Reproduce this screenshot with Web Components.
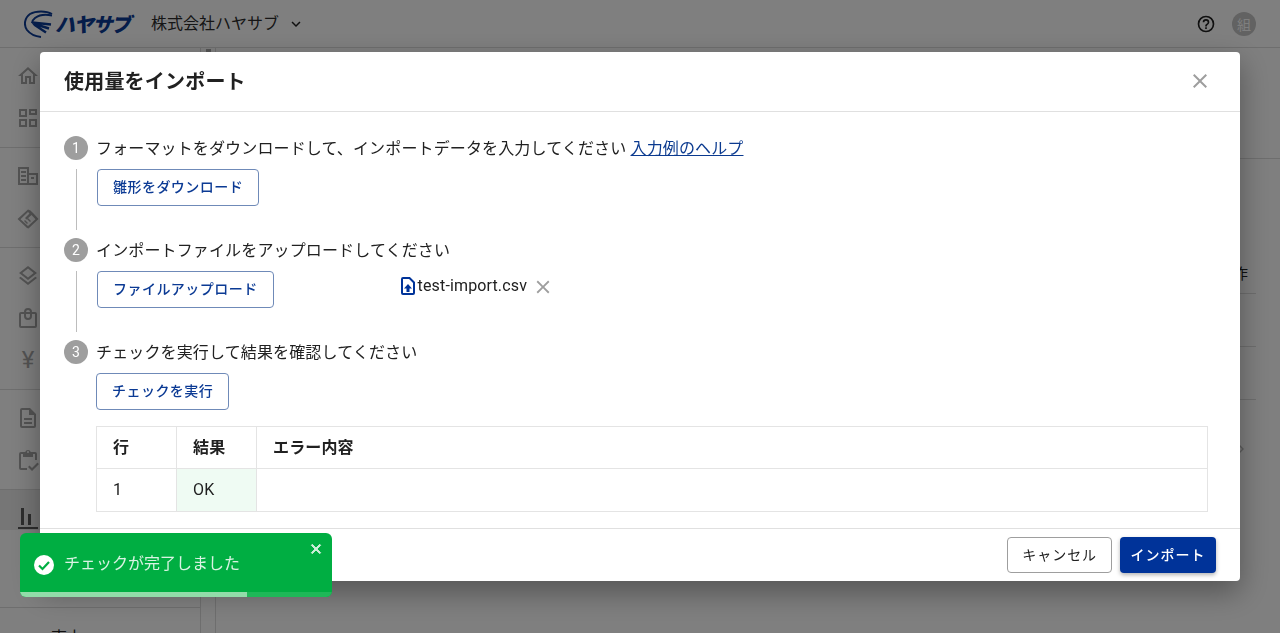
<!DOCTYPE html>
<html lang="ja"><head><meta charset="utf-8"><style>
html,body{margin:0;height:100%;overflow:hidden}
body{font-family:Roboto,"Noto Sans CJK JP",sans-serif;color:#212121;background:#fff}
</style></head><body>
<app-shell></app-shell>
<import-dialog></import-dialog>
<app-toast>チェックが完了しました</app-toast>
<script>
const FONT='Roboto,"Noto Sans CJK JP",sans-serif';
function def(name,html){customElements.define(name,class extends HTMLElement{constructor(){super();this.attachShadow({mode:'open'}).innerHTML=html;}});}
const ico=(d,s=24,f='#a8a8a8')=>`<svg width="${s}" height="${s}" viewBox="0 0 24 24" fill="${f}"><path d="${d}"/></svg>`;
const I={
home:'M12 5.690l5 4.500V18h-2v-6H9v6H7v-7.810l5-4.500M12 3L2 12h3v8h6v-6h2v6h6v-8h3L12 3z',
dash:'M3 3h8v8H3V3zm2 2v4h4V5H5zm8-2h8v6h-8V3zm2 2v2h4V5h-4zM3 13h8v8H3v-8zm2 2v4h4v-4H5zm8-2h8v8h-8v-8zm2 2v4h4v-4h-4z',
corp:'M2 3h11v18H2V3zm2 2v14h7V5H4zm1 2h5v2H5V7zm0 4h5v2H5v-2zm0 4h5v2H5v-2zm8-6h9v12h-9v-2h7V11h-7V9zm2 4h3v2h-3v-2z',
hand:'M12 3.500L1.500 13 11 22l1.500.500L22.500 13 18 8l-2-2-1.500-1.500zM12 6l1.500 1.500L9 12l1.500 1.500 5-4.500 4 4.200-7.500 6.800-7.500-6.800zM8 15l1-1 3 3-1 1zm3-2l1-1 3 3-1 1z',
layers:'M12 18.500l-7.400-5.700L3 14l9 7 9-7-1.600-1.200L12 18.500zM12 16l9-7-9-7-9 7 9 7zm0-11.500L17.700 9 12 13.500 6.300 9 12 4.500z',
bag:'M19 6h-3a4 4 0 0 0-8 0H5a2 2 0 0 0-2 2v12a2 2 0 0 0 2 2h14a2 2 0 0 0 2-2V8a2 2 0 0 0-2-2zm-7-2a2 2 0 0 1 2 2h-4a2 2 0 0 1 2-2zm7 16H5V8h3v2a4 4 0 0 0 8 0V8h3v12zM10 8h4v2a2 2 0 0 1-4 0V8z',
doc:'M14 2H6a2 2 0 0 0-2 2v16a2 2 0 0 0 2 2h12a2 2 0 0 0 2-2V8l-6-6zm4 18H6V4h7v5h5v11zM8 12h8v2H8v-2zm0 4h8v2H8v-2z',
task:'M19 4h-4.200a3 3 0 0 0-5.600 0H5a2 2 0 0 0-2 2v14a2 2 0 0 0 2 2h6v-2H5V6h2v3h10V6h2v6h2V6a2 2 0 0 0-2-2zm-7 1a1 1 0 1 1 0-2 1 1 0 0 1 0 2zm9.500 9.500L16 20l-2.500-2.500-1.500 1.500 4 4 7-7-2-1.500z',
chart:'M5 2h3v17H5V2zm7 6h3v11h-3V8zM2 21h20v2H2v-2z'
};
const navIcon=(k)=>`<div class="ni">${ico(I[k])}</div>`;
const CLOSE='M19 6.410L17.590 5 12 10.590 6.410 5 5 6.410 10.590 12 5 17.590 6.410 19 12 13.410 17.590 19 19 17.590 13.410 12z';

def('app-header',`<style>
:host{display:flex;align-items:center;height:47px;border-bottom:1px solid #ddd;background:#fff;padding:0 24px;font-family:${FONT}}
.logo{display:flex;align-items:center;width:110px;flex:none}
.word{font:italic 900 20px/1 "Noto Sans CJK JP",sans-serif;color:#0b3a94;letter-spacing:-1.300px;margin-left:2px;white-space:nowrap}
.co{margin-left:17px;padding-bottom:3px;font-size:16px;color:#2c2c2c;white-space:nowrap}
.sp{flex:1}
.av{width:24px;height:24px;border-radius:50%;background:#c4c4c4;color:#fff;font-size:14px;display:flex;align-items:center;justify-content:center;margin-left:16px}
.car{margin-left:8px;display:flex}
</style>
<div class="logo"><svg width="29" height="28" viewBox="0 0 29 28" fill="none" stroke="#0b3a94" stroke-width="2"><path d="M28 4C22 .5 12 .5 6 4 .5 8 -.5 15 3 20c3.500 4.500 9 6.500 14 7"/><path d="M28 5.500C21 4 15 5 11 8 8.500 10 8 11.500 8 13"/><path d="M8 12.500l19 2M9 13.500l16 5M10 14.500l12 8" stroke-width="2.400"/></svg><span class="word">ハヤサブ</span></div>
<span class="co">株式会社ハヤサブ</span>
<span class="car"><svg width="18" height="18" viewBox="0 0 24 24" fill="#212121"><path d="M7.410 8.590L12 13.170l4.590-4.580L18 10l-6 6-6-6z"/></svg></span>
<span class="sp"></span>
<svg width="20" height="20" viewBox="0 0 24 24" fill="#212121"><path d="M11 18h2v-2h-2v2zm1-16a10 10 0 1 0 0 20 10 10 0 0 0 0-20zm0 18a8 8 0 1 1 0-16 8 8 0 0 1 0 16zm0-14a4 4 0 0 0-4 4h2a2 2 0 1 1 4 0c0 2-3 1.750-3 5h2c0-2.250 3-2.500 3-5a4 4 0 0 0-4-4z"/></svg>
<span class="av">組</span>`);

def('side-nav',`<style>
:host{display:flex;flex-direction:column;width:200px;flex:none;background:#fff;border-right:1px solid #ddd;font-family:${FONT}}
.g{border-bottom:1px solid #ddd;padding:16px 0 0 16px;display:flex;flex-direction:column;gap:18px;box-sizing:border-box;flex:none}
.ni{height:24px;display:flex}
.sel{background:#ececec;height:40px;display:flex;align-items:flex-end;padding-left:16px;flex:none}
.yen{font:24px/24px Roboto,sans-serif;color:#a8a8a8;width:24px;justify-content:center}
.sales{margin-top:77px;border-top:1px solid #ddd;padding:20px 0 0 32px;font-size:16px;line-height:20px;display:flex;gap:10px;flex:none}
.tri{color:#616161;font-size:9px}
</style>
<div class="g" style="height:100px">${navIcon('home')}${navIcon('dash')}</div>
<div class="g" style="height:100px">${navIcon('corp')}${navIcon('hand')}</div>
<div class="g" style="height:142px">${navIcon('layers')}${navIcon('bag')}<div class="ni yen">¥</div></div>
<div class="g" style="height:100px">${navIcon('doc')}${navIcon('task')}</div>
<div class="sel">${ico(I.chart,24,'#5a5a5a')}</div>
<div class="sales"><span class="tri">▲</span><span>売上</span></div>`);

def('main-pane',`<style>
:host{display:flex;flex:1;min-width:0;background:#fff;font-family:${FONT}}
.gut{width:14px;border-right:1px solid #ddd;flex:none;display:flex;justify-content:center}
.gut i{display:block;width:5px;height:3px;background:#aaa;margin-top:1px}
.c{flex:1;display:flex;flex-direction:column;min-width:0}
.top{height:110px;border-bottom:1px solid #ddd;flex:none}
.t{margin:0 24px;display:flex;flex-direction:column;padding-top:100px}
.r{height:52px;border-bottom:1px solid #ddd;font-size:15px}
.hd{height:34px;line-height:30px;padding-right:8px;text-align:right}
.chev{display:flex;justify-content:flex-end;margin:41px 6px 0 0}
</style><div class="gut"><i></i></div><div class="c"><div class="top"></div>
<div class="t"><div class="r hd">作</div><div class="r"></div><div class="r"></div>
<div class="chev"><svg width="16" height="16" viewBox="0 0 24 24" fill="#bdbdbd"><path d="M9 6l6 6-6 6-1.500-1.500L12 12 7.500 7.500z"/></svg></div></div></div>`);

def('app-shell',`<style>
:host{display:flex;flex-direction:column;height:633px;overflow:hidden}
.b{display:flex;flex:1;min-height:0}
</style><app-header></app-header><div class="b"><side-nav></side-nav><main-pane></main-pane></div>`);

def('step-item',`<style>
:host{display:block;font-family:${FONT}}
.h{display:flex;align-items:center;gap:8px;height:24px;font-size:16px;color:#212121;white-space:nowrap}
.n{width:24px;height:24px;border-radius:50%;background:#9e9e9e;color:#fff;font-size:14px;display:flex;align-items:center;justify-content:center;flex:none}
.t{letter-spacing:.14px;padding-bottom:2px}
.b{margin:9px 0 8px 12px;padding-left:20px;border-left:1px solid #bdbdbd;height:61px;box-sizing:border-box}
:host([last]) .b{border:0;height:auto;margin:9px 0 0 32px;padding:0}
::slotted(a){color:#0b3a8f;text-decoration:underline}
</style><div class="h"><span class="n"><slot name="n"></slot></span><span class="t"><slot name="t"></slot></span></div><div class="b"><slot></slot></div>`);

def('ui-button',`<style>
:host{display:inline-flex;align-items:center;justify-content:center;height:37px;box-sizing:border-box;padding:0 15px 2px;border:1px solid #6f8ab8;border-radius:4px;background:#fff;color:#0b3a94;font:500 14px/1 ${FONT};letter-spacing:.46px;white-space:nowrap}
:host([neutral]){border-color:#9e9e9e;color:#212121;height:36px;font-weight:400;padding:0 14px 1px;letter-spacing:.98px}
:host([primary]){border:0;background:#003399;color:#fff;height:36px;padding:0 10.500px 1px;letter-spacing:.98px;box-shadow:0 2px 4px rgba(0,0,0,.3)}
</style><slot></slot>`);

def('result-table',`<style>
:host{display:grid;grid-template-columns:80px 80px 1fr;margin-top:16px;border:solid #e4e4e4;border-width:1px 1px 0 1px;font:16px/1 ${FONT};color:#212121;letter-spacing:.14px}
div{height:42px;display:flex;align-items:center;padding-left:16px;border-right:1px solid #e4e4e4;border-bottom:1px solid #e4e4e4}
.last{border-right:0}
.th{font-weight:700;height:41px}
.ok{background:#effbf3}
</style>
<div class="th">行</div><div class="th">結果</div><div class="th last">エラー内容</div>
<div>1</div><div class="ok">OK</div><div class="last"></div>`);

def('file-chip',`<style>
:host{display:inline-flex;align-items:center;gap:1px;font:16px/1 ${FONT};color:#212121;margin-left:125px;margin-top:3px;letter-spacing:.14px;white-space:nowrap}
svg{display:block}
.x{margin-left:4px;margin-top:2px}
</style>
<svg width="18" height="20" viewBox="0 0 18 20"><path d="M4 2h6.500L15 6.500V17a1 1 0 0 1-1 1H4a1 1 0 0 1-1-1V3a1 1 0 0 1 1-1z" fill="#fff" stroke="#003399" stroke-width="2"/><path d="M9 8l4 4.500h-2.500V16h-3v-3.500H5z" fill="#003399"/></svg>
<span><slot></slot></span>
<svg class="x" width="22" height="22" viewBox="0 0 24 24" fill="#9e9e9e"><path d="${CLOSE}"/></svg>`);

def('import-dialog',`<style>
:host{position:fixed;inset:0;background:rgba(0,0,0,.5);display:flex;justify-content:center;align-items:flex-start;font-family:${FONT}}
.d{margin-top:52px;width:1200px;height:529px;background:#fff;border-radius:4px;display:flex;flex-direction:column;box-shadow:0 11px 30px rgba(0,0,0,.35)}
.hd{flex:none;border-bottom:1px solid #e0e0e0;display:flex;align-items:center;justify-content:space-between;padding:0 28px 2px 24px;box-sizing:border-box;height:60px}
h1{margin:0;font-size:20px;font-weight:700;color:#212121;letter-spacing:.2px}
.bd{flex:1;padding:24px 32px 0 24px;min-height:0;overflow:hidden}
.row{display:flex;align-items:flex-start}
.ft{height:52px;flex:none;border-top:1px solid #e0e0e0;display:flex;align-items:center;justify-content:flex-end;gap:8px;padding:0 24px}
</style>
<div class="d">
<div class="hd"><h1>使用量をインポート</h1><svg width="24" height="24" viewBox="0 0 24 24" fill="#9e9e9e"><path d="${CLOSE}"/></svg></div>
<div class="bd">
<step-item><span slot="n">1</span><span slot="t">フォーマットをダウンロードして、インポートデータを入力してください </span><a slot="t" href="#">入力例のヘルプ</a><ui-button>雛形をダウンロード</ui-button></step-item>
<step-item><span slot="n">2</span><span slot="t">インポートファイルをアップロードしてください</span><div class="row"><ui-button>ファイルアップロード</ui-button><file-chip>test-import.csv</file-chip></div></step-item>
<step-item last><span slot="n">3</span><span slot="t">チェックを実行して結果を確認してください</span><ui-button>チェックを実行</ui-button><result-table></result-table></step-item>
</div>
<div class="ft"><ui-button neutral>キャンセル</ui-button><ui-button primary>インポート</ui-button></div>
</div>`);

def('app-toast',`<style>
:host{position:fixed;left:20px;top:533px;width:312px;height:64px;background:#00ae42;border-radius:6px;overflow:hidden;color:rgba(255,255,255,.85);font:16px/1 ${FONT};display:flex;align-items:center;box-sizing:border-box;padding:0 0 1px 13px;gap:9px}
.tx{padding-bottom:1px}
.cl{position:absolute;right:8px;top:8px;display:block}
.bar{position:absolute;left:0;right:0;bottom:0;height:5px;background:#1fb858}
.bar i{display:block;height:100%;width:227px;background:#92dca9}
</style>
<svg width="22" height="22" viewBox="0 0 22 22"><circle cx="11" cy="11" r="10" fill="#fff"/><path d="M6 11.500l3.500 3.500L16 8" fill="none" stroke="#00ae42" stroke-width="2.200"/></svg>
<span class="tx"><slot></slot></span>
<svg class="cl" width="16" height="16" viewBox="0 0 24 24" fill="#cdeeda"><path d="${CLOSE}" stroke="#cdeeda" stroke-width="1.500"/></svg>
<div class="bar"><i></i></div>`);
</script></body></html>
